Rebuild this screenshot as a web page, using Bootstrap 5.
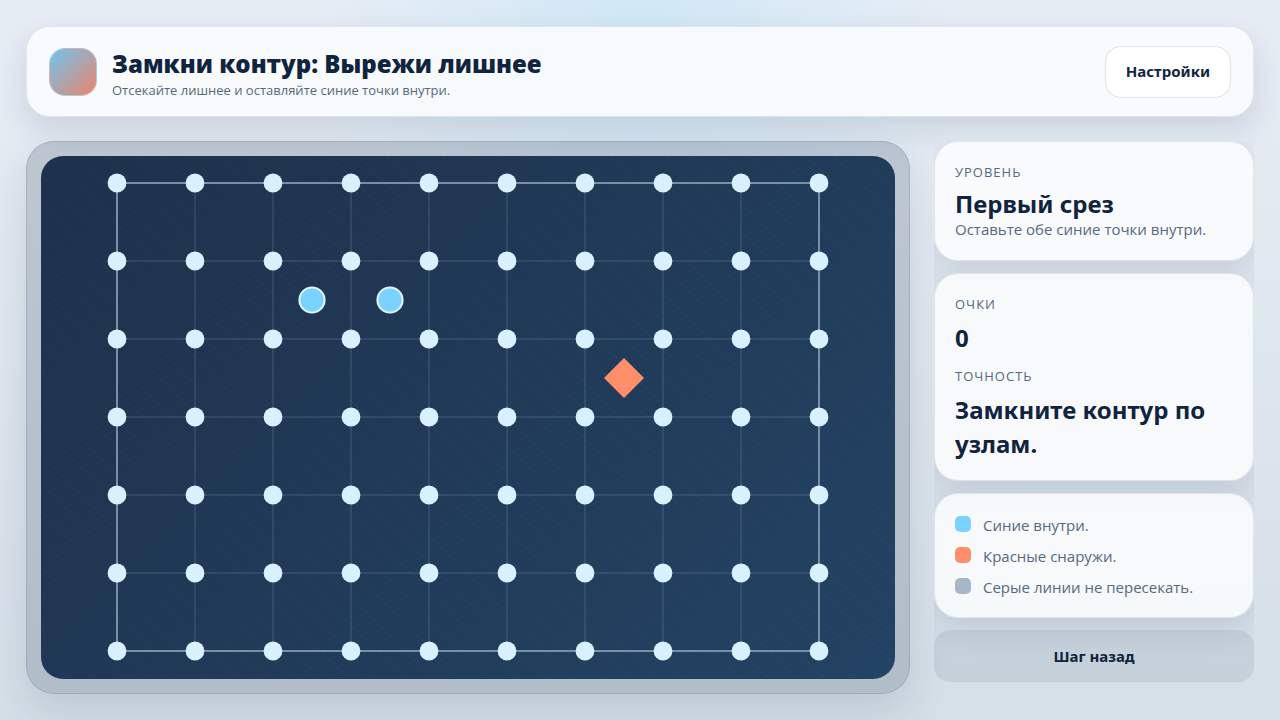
<!DOCTYPE html>
<html lang="ru">
<head>
<meta charset="utf-8">
<meta name="viewport" content="width=device-width, initial-scale=1">
<title>Замкни контур: Вырежи лишнее</title>
<link href="https://cdn.jsdelivr.net/npm/bootstrap@5.3.0/dist/css/bootstrap.min.css" rel="stylesheet">
<style>
:root { --ink: #10243e; --muted-ink: #56697f; }
body {
  font-family: "Open Sans", "Noto Sans", sans-serif; font-size: 15px; line-height: 20px; color: var(--ink);
  background: radial-gradient(circle at 50% 0, rgba(122, 211, 255, .2), transparent 340px),
    linear-gradient(180deg, #e7edf5, #d5dfe8);
}
.shell { padding: 26px; gap: 24px; }
.panel {
  background: rgba(252, 253, 253, .85); border: 1px solid rgba(16, 36, 62, .1);
  border-radius: 24px; box-shadow: 0 12px 30px rgba(16, 36, 62, .12);
}
.topbar { padding: 18px 22px; }
.logo-tile {
  width: 48px; height: 48px; border-radius: 16px; border: 1px solid rgba(255, 255, 255, .3);
  background: linear-gradient(135deg, #6fc5ee, #e9846a);
}
.brand { gap: 15px; }
.game-title { font-size: 24px; line-height: 37px; font-weight: 800; }
.game-sub { font-size: 13px; line-height: 16px; color: var(--muted-ink); }
.game-btn { font-family: "Noto Sans", sans-serif; font-size: 15px; font-weight: 700; color: var(--ink); border-radius: 16px; min-height: 52px; padding: 0 20px; }
.btn-light-card, .btn-light-card:hover { background: #fff; border: 1px solid rgba(16, 36, 62, .12); color: var(--ink); }
.btn-back, .btn-back:hover { background: rgba(16, 36, 62, .08); border: 0; color: var(--ink); }
.stage {
  padding: 14px; border-radius: 28px; background: rgba(16, 36, 62, .18);
  border: 1px solid rgba(16, 36, 62, .12); box-shadow: 0 18px 40px rgba(16, 36, 62, .12);
}
.board { display: block; border-radius: 22px; background: linear-gradient(135deg, #1d314b, #234364); }
.side { flex: 0 0 320px; gap: 12px; overflow: hidden; }
.info { padding: 21px 20px 19px; }
.label-cap { font-size: 13px; line-height: 18px; letter-spacing: 1px; margin-bottom: 8px; text-transform: uppercase; color: var(--muted-ink); }
.value, .level-name { font-family: "Noto Sans", sans-serif; font-size: 24px; font-weight: 700; }
.value { line-height: 34px; }
.level-name { line-height: 30px; }
.score { margin-bottom: 12px; }
.note { color: var(--muted-ink); }
.goal { margin-bottom: 2px; }
.legend { gap: 10px; line-height: 21px; }
.legend li { gap: 12px; }
.swatch { width: 16px; height: 16px; margin-top: 1px; border-radius: 5px; }
</style>
</head>
<body>
<div class="shell d-flex flex-column min-vh-100">
  <header class="panel topbar d-flex align-items-center justify-content-between">
    <div class="brand d-flex align-items-center">
      <div class="logo-tile flex-shrink-0"></div>
      <div>
        <h1 class="game-title m-0">Замкни контур: Вырежи лишнее</h1>
        <p class="game-sub m-0">Отсекайте лишнее и оставляйте синие точки внутри.</p>
      </div>
    </div>
    <button type="button" class="btn game-btn btn-light-card">Настройки</button>
  </header>
  <div class="d-flex flex-grow-1 gap-4">
    <main class="stage d-flex flex-grow-1">
      <svg class="board w-100 h-100" viewBox="0 0 854 523" preserveAspectRatio="xMidYMid slice" role="img" aria-label="Игровое поле">
        <defs>
          <pattern id="hatch" width="28" height="28" patternUnits="userSpaceOnUse" y="523">
            <path d="M-1-1 29 29" stroke="#fff" stroke-opacity=".035"/>
          </pattern>
          <pattern id="cells" x="76" y="27" width="78" height="78" patternUnits="userSpaceOnUse">
            <path d="M0 0H78M0 0V78M78 0V78M0 78H78" stroke="#94b0ca" stroke-opacity=".14" stroke-width="2" fill="none"/>
          </pattern>
          <pattern id="nodes" x="37" y="-12" width="78" height="78" patternUnits="userSpaceOnUse">
            <circle cx="39" cy="39" r="9.4" fill="#d9f1ff"/>
          </pattern>
        </defs>
        <rect width="854" height="523" fill="url(#hatch)"/>
        <rect x="76" y="27" width="702" height="468" fill="url(#cells)"/>
        <rect x="76" y="27" width="702" height="468" fill="none" stroke="#7690a8" stroke-width="2"/>
        <rect x="37" y="-12" width="780" height="546" fill="url(#nodes)"/>
        <g fill="#7ad3ff" stroke="#e2f5ff" stroke-width="2"><circle cx="271" cy="144" r="12.6"/><circle cx="349" cy="144" r="12.6"/></g>
        <path d="M583 202 603 222 583 242 563 222Z" fill="#ff8f6b"/>
      </svg>
    </main>
    <aside class="side d-flex flex-column">
      <section class="panel info">
        <div class="label-cap">Уровень</div>
        <h2 class="level-name m-0">Первый срез</h2>
        <p class="note goal">Оставьте обе синие точки внутри.</p>
      </section>
      <section class="panel info">
        <div class="label-cap">Очки</div>
        <div class="value score">0</div>
        <div class="label-cap">Точность</div>
        <div class="value">Замкните контур по узлам.</div>
      </section>
      <section class="panel info">
        <ul class="legend list-unstyled note d-grid m-0">
          <li class="d-flex align-items-start"><span class="swatch" style="background:#7ad3ff"></span>Синие внутри.</li>
          <li class="d-flex align-items-start"><span class="swatch" style="background:#ff8f6b"></span>Красные снаружи.</li>
          <li class="d-flex align-items-start"><span class="swatch" style="background:#a7b6c8"></span>Серые линии не пересекать.</li>
        </ul>
      </section>
      <button type="button" class="btn game-btn btn-back w-100">Шаг назад</button>
    </aside>
  </div>
</div>
<script src="https://cdn.jsdelivr.net/npm/bootstrap@5.3.0/dist/js/bootstrap.bundle.min.js"></script>
</body>
</html>
